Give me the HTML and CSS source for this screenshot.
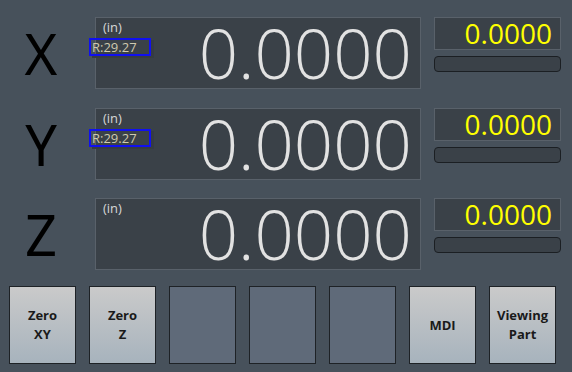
FILE: index.html
```html
<!DOCTYPE html>
<html>
<head>
<meta charset="utf-8">
<link rel="stylesheet" href="styles.css">
</head>
<body>
<div class="screen">
  <div class="axes">
    <div class="axis-row">
      <div class="axis-letter">X</div>
      <div class="dro">
        <span class="unit">(in)</span>
        <span class="radius">R:29.27</span>
        <span class="value">0.0000</span>
      </div>
      <div class="side">
        <div class="small-dro">0.0000</div>
        <div class="bar"></div>
      </div>
    </div>
    <div class="axis-row">
      <div class="axis-letter">Y</div>
      <div class="dro">
        <span class="unit">(in)</span>
        <span class="radius">R:29.27</span>
        <span class="value">0.0000</span>
      </div>
      <div class="side">
        <div class="small-dro">0.0000</div>
        <div class="bar"></div>
      </div>
    </div>
    <div class="axis-row">
      <div class="axis-letter">Z</div>
      <div class="dro">
        <span class="unit">(in)</span>
        <span class="value">0.0000</span>
      </div>
      <div class="side">
        <div class="small-dro">0.0000</div>
        <div class="bar"></div>
      </div>
    </div>
  </div>
  <div class="buttons">
    <button class="btn light">Zero<br>XY</button>
    <button class="btn light">Zero<br>Z</button>
    <button class="btn dark"></button>
    <button class="btn dark"></button>
    <button class="btn dark"></button>
    <button class="btn light">MDI</button>
    <button class="btn light">Viewing<br>Part</button>
  </div>
</div>
</body>
</html>
```
FILE: styles.css
```css
html, body {
  margin: 0;
  padding: 0;
  background: #47515b;
  width: 572px;
  height: 372px;
  overflow: hidden;
}
.screen {
  padding-top: 17px;
  font-family: "Open Sans", sans-serif;
}
.axes {
  display: flex;
  flex-direction: column;
  gap: 18.5px;
}
.axis-row {
  display: flex;
  height: 72px;
}
.axis-letter {
  width: 82px;
  flex: none;
  text-align: center;
  font-family: "Noto Sans", sans-serif;
  font-weight: 400;
  font-size: 56px;
  line-height: 72px;
  color: #000;
  margin-right: 13px;
}
.dro {
  position: relative;
  width: 326px;
  box-sizing: border-box;
  height: 72px;
  background: #3a4148;
  border: 1px solid #59616a;
  display: flex;
  justify-content: flex-end;
  align-items: flex-end;
  padding-right: 8px;
}
.unit {
  position: absolute;
  left: 7px;
  top: 0px;
  font-size: 13px;
  color: #d6d6d6;
}
.radius {
  position: absolute;
  left: -7px;
  top: 20px;
  width: 62px;
  height: 18px;
  box-sizing: border-box;
  border: 2px solid #1010f0;
  font-size: 13px;
  line-height: 14px;
  color: #cfcab0;
  padding-left: 1px;
  box-shadow: 3px 2px 0 #363c43;
  white-space: nowrap;
}
.value {
  font-size: 69px;
  font-weight: 300;
  line-height: 1;
  color: #e2e2e2;
  margin-bottom: 1px;
}
.side {
  margin-left: 13px;
  width: 127px;
  display: flex;
  flex-direction: column;
  gap: 6px;
}
.small-dro {
  height: 33px;
  box-sizing: border-box;
  background: #3a4148;
  border: 1px solid #59616a;
  color: #ffff00;
  font-size: 28px;
  line-height: 30px;
  text-align: right;
  padding-right: 8px;
}
.bar {
  height: 16px;
  box-sizing: border-box;
  background: #3a4148;
  border: 1px solid #1b1f23;
  border-radius: 4px;
}
.buttons {
  display: flex;
  gap: 13px;
  padding-left: 9px;
  margin-top: 16px;
}
.btn {
  width: 67px;
  height: 78px;
  box-sizing: border-box;
  border: 1px solid #1e2226;
  border-radius: 0;
  padding: 0;
  font-family: "Open Sans", sans-serif;
  font-weight: 700;
  font-size: 13px;
  line-height: 19px;
  color: #1a1a1a;
}
.btn.light {
  background: linear-gradient(#cacaca, #a7b3bd);
}
.btn.dark {
  background: #5f6a79;
}
```
